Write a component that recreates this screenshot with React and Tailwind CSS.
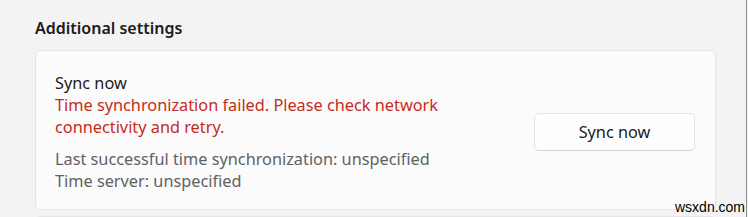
export default function App() {
  return (
    <div className="relative w-[748px] h-[217px] overflow-hidden bg-[#f3f3f3] font-['Noto_Sans',sans-serif]">
      <div className="pl-[35px] pr-[32px] pt-[16px]">
        <h2 className="text-[16px] leading-[25px] font-semibold text-[#1b1b1b]">Additional settings</h2>
        <div className="mt-[9px] flex items-center justify-between rounded-[5px] border border-[#e5e5e5] bg-[#fbfbfb] pl-[19px] pr-[20px] pt-[21px] pb-[17px]">
          <div className="text-[16.3px] leading-[22px]">
            <div className="text-[#1b1b1b]">Sync now</div>
            <div className="text-[#c42b1c]">
              Time synchronization failed. Please check network
              <br />
              connectivity and retry.
            </div>
            <div className="mt-[10px] text-[#616161]">
              <div>Last successful time synchronization: unspecified</div>
              <div>Time server: unspecified</div>
            </div>
          </div>
          <button className="w-[161px] h-[38px] rounded-[5px] border border-[#e3e3e3] border-b-[#d0d0d0] bg-[#fefefe] text-[16.3px] text-[#1b1b1b]">
            Sync now
          </button>
        </div>
        <div className="mt-[6px] h-[20px] rounded-t-[5px] border border-[#e5e5e5] bg-[#fbfbfb]" />
      </div>
      <div className="absolute right-[1px] top-0 h-full w-[1px] bg-[#8d8d8d]" />
      <div className="absolute left-[675px] top-[199px] font-['Liberation_Sans',sans-serif] text-[14px] leading-[16px] text-black">wsxdn.com</div>
    </div>
  );
}
